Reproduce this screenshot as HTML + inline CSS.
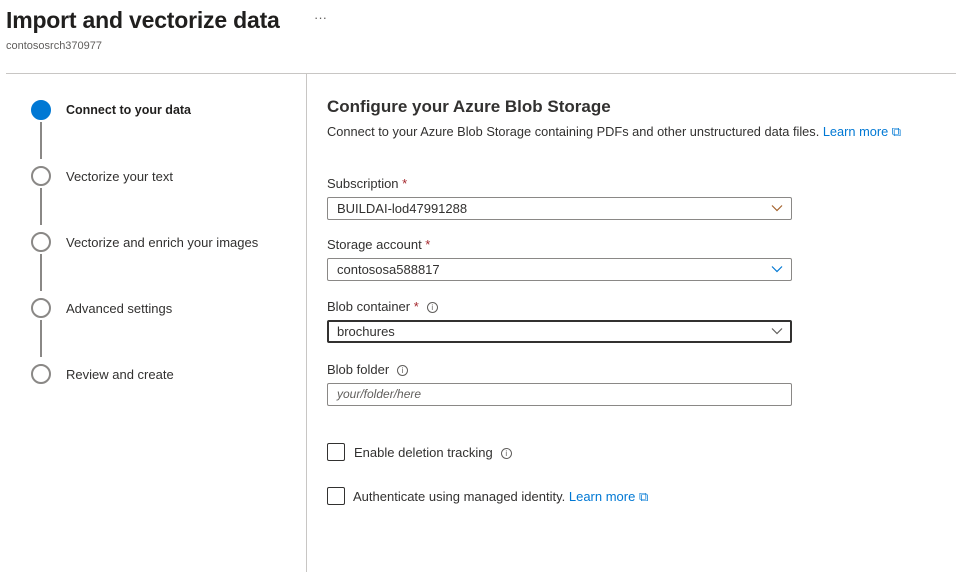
<!DOCTYPE html>
<html><head><style>
*{margin:0;padding:0;box-sizing:border-box}
body{width:956px;height:572px;background:#fff;font-family:"Liberation Sans",sans-serif;color:#323130;position:relative;overflow:hidden;font-size:13px}
.a{position:absolute;white-space:nowrap}
.step{position:absolute;left:31px;width:20px;height:20px;border:2px solid #8a8886;border-radius:50%;background:#fff}
.vl{position:absolute;left:40px;width:2px;background:#8a8886}
.sl{position:absolute;left:66px;font-size:13px;color:#323130}
.lbl{position:absolute;left:327px;font-size:13px;color:#323130}
.req{color:#a4262c}
.box{position:absolute;left:327px;width:465px;height:23px;border:1px solid #8a8886;border-radius:2px;padding-left:9px;line-height:21px;font-size:13px}
.chev{position:absolute;right:8px;top:6px}
.info{display:inline-block;width:11px;height:11px;border:1px solid #605e5c;border-radius:50%;font-size:8px;line-height:9px;text-align:center;color:#605e5c;vertical-align:middle;margin-left:8px;font-style:normal}
.cb{position:absolute;left:327px;width:18px;height:18px;border:1px solid #323130;border-radius:2px}
.link{color:#0078d4}
</style></head><body>
<div class="a" style="left:6px;top:7px;font-size:23px;font-weight:bold;color:#201f1e;letter-spacing:-0.2px">Import and vectorize data</div>
<div class="a" style="left:314px;top:10px;font-size:13px;color:#605e5c">···</div>
<div class="a" style="left:6px;top:40px;font-size:11px;color:#605e5c">contososrch370977</div>
<div class="a" style="left:6px;top:73px;width:950px;height:1px;background:#c8c6c4"></div>
<div class="a" style="left:306px;top:74px;width:1px;height:498px;background:#c8c6c4"></div>

<div class="step" style="top:100px;background:#0078d4;border-color:#0078d4"></div>
<div class="vl" style="top:122px;height:37px"></div>
<div class="step" style="top:166px"></div>
<div class="vl" style="top:188px;height:37px"></div>
<div class="step" style="top:232px"></div>
<div class="vl" style="top:254px;height:37px"></div>
<div class="step" style="top:298px"></div>
<div class="vl" style="top:320px;height:37px"></div>
<div class="step" style="top:364px"></div>
<div class="sl" style="top:103px;font-weight:bold;font-size:12.5px;color:#201f1e">Connect to your data</div>
<div class="sl" style="top:169px">Vectorize your text</div>
<div class="sl" style="top:235px">Vectorize and enrich your images</div>
<div class="sl" style="top:301px">Advanced settings</div>
<div class="sl" style="top:367px">Review and create</div>

<div class="a" style="left:327px;top:97px;font-size:17px;font-weight:bold;color:#323130">Configure your Azure Blob Storage</div>
<div class="a" style="left:327px;top:124px;font-size:12.8px">Connect to your Azure Blob Storage containing PDFs and other unstructured data files. <span class="link">Learn more ⧉</span></div>

<div class="lbl" style="top:176px">Subscription <span class="req">*</span></div>
<div class="box" style="top:197px">BUILDAI-lod47991288<svg class="chev" width="12" height="8" viewBox="0 0 12 8"><path d="M1 1.5l5 5 5-5" fill="none" stroke="#a4622c" stroke-width="1.2"/></svg></div>
<div class="lbl" style="top:237px">Storage account <span class="req">*</span></div>
<div class="box" style="top:258px">contososa588817<svg class="chev" width="12" height="8" viewBox="0 0 12 8"><path d="M1 1.5l5 5 5-5" fill="none" stroke="#0078d4" stroke-width="1.2"/></svg></div>
<div class="lbl" style="top:299px">Blob container <span class="req">*</span><i class="info">i</i></div>
<div class="box" style="top:320px;border:2px solid #323130;line-height:19px;padding-left:8px">brochures<svg class="chev" width="12" height="8" viewBox="0 0 12 8" style="top:5px;right:7px"><path d="M1 1.5l5 5 5-5" fill="none" stroke="#605e5c" stroke-width="1.2"/></svg></div>
<div class="lbl" style="top:362px">Blob folder<i class="info">i</i></div>
<div class="box" style="top:383px;font-style:italic;color:#605e5c;font-size:12px">your/folder/here</div>

<div class="cb" style="top:443px"></div>
<div class="a" style="left:354px;top:445px">Enable deletion tracking<i class="info">i</i></div>
<div class="cb" style="top:487px"></div>
<div class="a" style="left:353px;top:489px">Authenticate using managed identity. <span class="link">Learn more ⧉</span></div>
</body></html>
